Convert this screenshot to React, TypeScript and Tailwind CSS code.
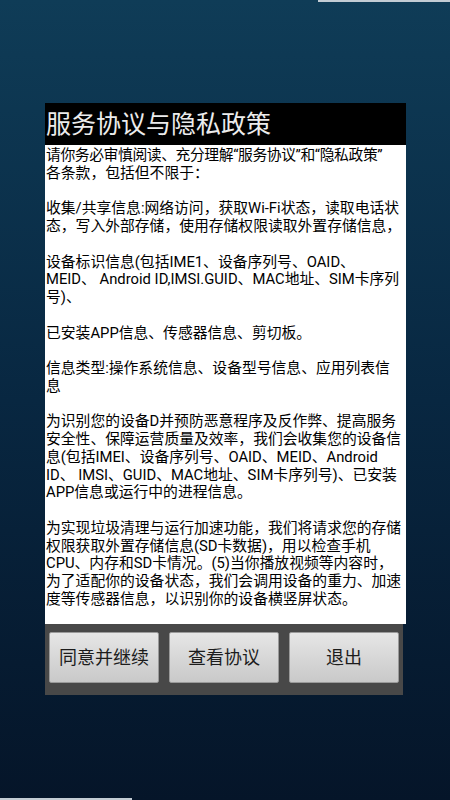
const paragraphs = [
  ['请你务必审慎阅读、充分理解“服务协议”和“隐私政策”', '各条款，包括但不限于：'],
  ['收集/共享信息:网络访问，获取Wi-Fi状态，读取电话状', '态，写入外部存储，使用存储权限读取外置存储信息，'],
  ['设备标识信息(包括IME1、设备序列号、OAID、', 'MEID、 Android ID,IMSI.GUID、MAC地址、SIM卡序列', '号)、'],
  ['已安装APP信息、传感器信息、剪切板。'],
  ['信息类型:操作系统信息、设备型号信息、应用列表信', '息'],
  [
    '为识别您的设备D并预防恶意程序及反作弊、提高服务',
    '安全性、保障运营质量及效率，我们会收集您的设备信',
    '息(包括IMEI、设备序列号、OAID、MEID、Android',
    'ID、 IMSI、GUID、MAC地址、SIM卡序列号)、已安装',
    'APP信息或运行中的进程信息。',
  ],
  [
    '为实现垃圾清理与运行加速功能，我们将请求您的存储',
    '权限获取外置存储信息(SD卡数据)，用以检查手机',
    'CPU、内存和SD卡情况。(5)当你播放视频等内容时，',
    '为了适配你的设备状态，我们会调用设备的重力、加速',
    '度等传感器信息，以识别你的设备横竖屏状态。',
  ],
];

const buttons = ['同意并继续', '查看协议', '退出'];

export default function App() {
  return (
    <div
      className="flex h-[800px] w-[450px] flex-col bg-gradient-to-b from-[#0f3c57] via-[#082741] to-[#051529]"
      style={{ fontFamily: 'Roboto, "Noto Sans CJK SC", sans-serif' }}
    >
      <div className="flex justify-end">
        <div className="h-[2px] w-[132px] bg-[#c3ccd4]" />
      </div>

      <div className="ml-[45px] mt-[101px] flex w-[361px] flex-col">
        <div className="flex h-[42px] items-center bg-black pl-[1px]">
          <h1 className="text-[25px] leading-none text-[#ececec]">服务协议与隐私政策</h1>
        </div>

        <div className="flex h-[479px] flex-col gap-[17.75px] overflow-hidden bg-white pl-[1px] pt-[2px] text-[14.8px] leading-[17.75px] text-black">
          {paragraphs.map((lines, i) => (
            <div key={i} className="flex flex-col">
              {lines.map((line, j) => (
                <div
                  key={j}
                  className={
                    i === 0 && j === 0
                      ? 'flex h-[17.75px] items-center whitespace-nowrap tracking-[-0.4px]'
                      : 'flex h-[17.75px] items-center whitespace-nowrap'
                  }
                >
                  {line}
                </div>
              ))}
            </div>
          ))}
        </div>

        <div className="mr-[3px] flex gap-[10px] bg-[#484848] pb-[12px] pl-[4px] pr-[4px] pt-[8px]">
          {buttons.map((label) => (
            <button
              key={label}
              className="flex h-[51px] flex-1 items-center justify-center rounded-[2px] border border-[#9a9a9a] bg-gradient-to-b from-[#e6e6e6] to-[#c9c9c9] text-[18px] text-[#1c1c1c]"
            >
              {label}
            </button>
          ))}
        </div>
      </div>

      <div className="flex-1" />
      <div className="h-[2px] w-[132px] bg-[#c3ccd4]" />
    </div>
  );
}
